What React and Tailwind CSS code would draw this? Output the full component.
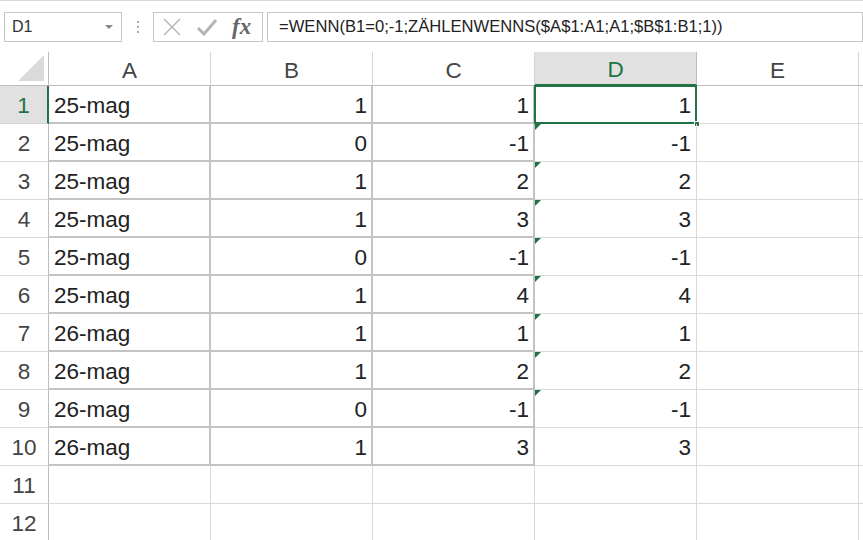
import React from "react";

const rows = [
  ["25-mag", 1, 1, 1],
  ["25-mag", 0, -1, -1],
  ["25-mag", 1, 2, 2],
  ["25-mag", 1, 3, 3],
  ["25-mag", 0, -1, -1],
  ["25-mag", 1, 4, 4],
  ["26-mag", 1, 1, 1],
  ["26-mag", 1, 2, 2],
  ["26-mag", 0, -1, -1],
  ["26-mag", 1, 3, 3],
  [null, null, null, null],
  [null, null, null, null],
];

const cols = ["A", "B", "C", "D", "E"];

function Triangle() {
  return (
    <span className="absolute left-0 top-0 w-0 h-0 border-t-[6px] border-r-[6px] border-t-[#1e7145] border-r-transparent" />
  );
}

export default function App() {
  return (
    <div
      className="w-[863px] h-[540px] overflow-hidden bg-white text-[#222]"
      style={{ fontFamily: '"Liberation Sans", Arial, sans-serif' }}
    >
      {/* Formula bar */}
      <div className="h-[52px] border-t border-[#d8d8d8] flex items-start pt-[11px] pl-[4px]">
        <div className="w-[118px] h-[30px] border border-[#c6c6c6] flex items-center justify-between pl-[7px] pr-[8px]">
          <span className="text-[16px] text-[#333]">D1</span>
          <span className="w-0 h-0 border-l-[4px] border-r-[4px] border-t-[4px] border-l-transparent border-r-transparent border-t-[#888]" />
        </div>
        <div className="w-[31px] h-[30px] flex flex-col items-center justify-center gap-[3px]">
          <span className="w-[2px] h-[2px] bg-[#aaa]" />
          <span className="w-[2px] h-[2px] bg-[#aaa]" />
          <span className="w-[2px] h-[2px] bg-[#aaa]" />
        </div>
        <div className="w-[110px] h-[30px] border border-[#c6c6c6] flex items-center pl-[8px] gap-[14px]">
          <svg width="20" height="20" viewBox="0 0 20 20">
            <path d="M2 2 L18 18 M18 2 L2 18" stroke="#b4b4b4" strokeWidth="1.4" fill="none" />
          </svg>
          <svg width="22" height="20" viewBox="0 0 22 20">
            <path d="M2 11 L8 17 L20 3" stroke="#b4b4b4" strokeWidth="3" fill="none" />
          </svg>
          <span
            className="text-[23px] italic font-bold text-[#666] leading-none -mt-[2px]"
            style={{ fontFamily: '"Liberation Serif", "Times New Roman", serif' }}
          >
            fx
          </span>
        </div>
        <div className="ml-[4px] flex-1 h-[30px] border border-[#c6c6c6] flex items-center pl-[11px] text-[16.6px] text-[#222]">
          =WENN(B1=0;-1;ZÄHLENWENNS($A$1:A1;A1;$B$1:B1;1))
        </div>
      </div>

      {/* Grid */}
      <div className="grid grid-cols-[49px_162px_162px_162px_162px_162px_20px] grid-rows-[34px_repeat(12,38px)]">
        {/* header row */}
        <div className="border-r border-b border-[#bdbdbd] flex items-end justify-end pr-[4px] pb-[4px]">
          <span className="w-0 h-0" style={{ borderBottom: "26px solid #dadada", borderLeft: "26px solid transparent" }} />
        </div>
        {cols.map((c) =>
          c === "D" ? (
            <div
              key={c}
              className="bg-[#e1e1e1] border-r border-[#bdbdbd] border-b-2 border-b-[#217346] flex items-center justify-center pt-[4px] text-[22.5px] text-[#217346]"
            >
              {c}
            </div>
          ) : (
            <div
              key={c}
              className="border-r border-b border-[#d4d4d4] border-b-[#bdbdbd] flex items-center justify-center pt-[4px] text-[22.5px] text-[#444]"
            >
              {c}
            </div>
          )
        )}
        <div className="border-b border-[#bdbdbd]" />

        {rows.map((r, i) => {
          const inTable = i < 10;
          const cellBorder = inTable
            ? "border-r-2 border-b-2 border-[#c3c3c3]"
            : "border-r border-b border-[#d9d9d9]";
          return (
            <React.Fragment key={i}>
              <div
                className={
                  i === 0
                    ? "bg-[#e1e1e1] border-r-2 border-r-[#217346] border-b border-b-[#d4d4d4] flex items-center justify-center text-[22.5px] text-[#217346] pt-[3px]"
                    : "border-r border-r-[#bdbdbd] border-b border-b-[#d9d9d9] flex items-center justify-center text-[22.5px] text-[#444] pt-[3px]"
                }
              >
                {i + 1}
              </div>
              <div className={`${cellBorder} flex items-center pl-[5px] pt-[3px] text-[22.5px]`}>{r[0]}</div>
              <div className={`${cellBorder} flex items-center justify-end pr-[4px] pt-[3px] text-[22.5px]`}>{r[1]}</div>
              <div className={`${cellBorder} flex items-center justify-end pr-[4px] pt-[3px] text-[22.5px]`}>{r[2]}</div>
              <div className="relative border-r border-b border-[#d9d9d9] flex items-center justify-end pr-[5px] pt-[3px] text-[22.5px]">
                {r[3]}
                {i >= 1 && i <= 8 && <Triangle />}
                {i === 0 && (
                  <>
                    <span className="absolute -left-[1px] -top-[1px] right-[-1px] bottom-[-1px] border-2 border-[#217346]" />
                    <span className="absolute right-[-4px] bottom-[-4px] w-[6px] h-[6px] bg-[#217346] border border-white" />
                  </>
                )}
              </div>
              <div className="border-r border-b border-[#d9d9d9]" />
              <div className="border-b border-[#d9d9d9]" />
            </React.Fragment>
          );
        })}
      </div>
    </div>
  );
}
